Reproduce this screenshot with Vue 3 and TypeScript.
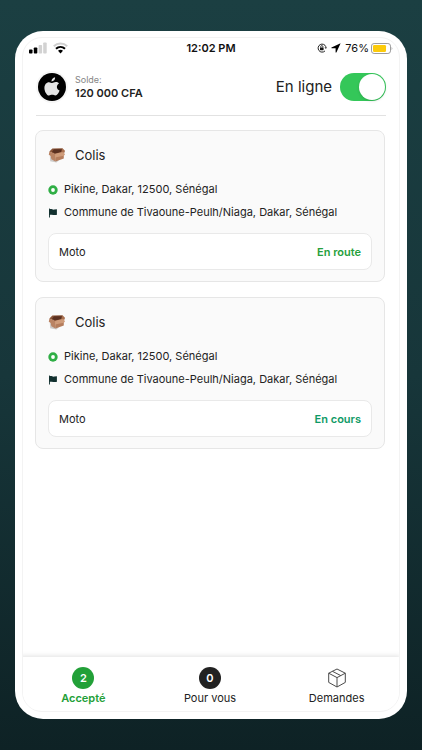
<script setup lang="ts">
import { ref } from 'vue'

interface Delivery {
  id: number
  kind: string
  from: string
  to: string
  vehicle: string
  status: string
  tone: 'green' | 'teal'
}

interface Tab {
  label: string
  count?: number
}

const online = ref(true)
const active = ref('Accepté')

const deliveries: Delivery[] = [
  {
    id: 1,
    kind: 'Colis',
    from: 'Pikine, Dakar, 12500, Sénégal',
    to: 'Commune de Tivaoune-Peulh/Niaga, Dakar, Sénégal',
    vehicle: 'Moto',
    status: 'En route',
    tone: 'green',
  },
  {
    id: 2,
    kind: 'Colis',
    from: 'Pikine, Dakar, 12500, Sénégal',
    to: 'Commune de Tivaoune-Peulh/Niaga, Dakar, Sénégal',
    vehicle: 'Moto',
    status: 'En cours',
    tone: 'teal',
  },
]

const tabs: Tab[] = [
  { label: 'Accepté', count: 2 },
  { label: 'Pour vous', count: 0 },
  { label: 'Demandes' },
]
</script>

<template>
  <div class="page">
    <div class="phone">
      <div class="screen">
        <div class="status-bar">
          <div class="status-left">
            <svg width="18" height="12" viewBox="0 0 18 12" aria-hidden="true">
              <rect x="0" y="7.5" width="3.5" height="4" rx="0.8" fill="#000" />
              <rect x="4.8" y="5.5" width="3.5" height="6" rx="0.8" fill="#000" />
              <rect x="9.6" y="3" width="3.5" height="8.5" rx="0.8" fill="#d2d2d2" />
              <rect x="14.2" y="0.5" width="3.5" height="11" rx="0.8" fill="#d2d2d2" />
            </svg>
            <svg width="15" height="12" viewBox="0 0 15 12" fill="none" aria-hidden="true">
              <path d="M0.8 4.3C4.5 0.7 10.5 0.7 14.2 4.3" stroke="#cfcfcf" stroke-width="2" />
              <path d="M3 6.8C5.6 4.4 9.4 4.4 12 6.8" stroke="#000" stroke-width="2" />
              <path d="M5 8.8C6.4 7.5 8.6 7.5 10 8.8L7.5 11.5Z" fill="#000" />
            </svg>
          </div>
          <span class="clock">12:02 PM</span>
          <div class="status-right">
            <svg width="10" height="10" viewBox="0 0 10 10" fill="none" aria-hidden="true">
              <path d="M8.9 3.8A4 4 0 1 0 8 7.9" stroke="#222" stroke-width="1" />
              <path d="M7.5 4.2H10L8.9 6Z" fill="#222" />
              <rect x="3" y="4.5" width="3.6" height="2.7" rx="0.4" fill="#111" />
              <path d="M3.7 4.6V3.7a1.1 1.1 0 0 1 2.2 0V4.6" stroke="#111" stroke-width="0.8" />
            </svg>
            <svg class="arrow" width="10" height="10" viewBox="0 0 10 10" aria-hidden="true">
              <path d="M9.6 0.3L0.5 4.4Q0 4.9 0.7 5.3H4.6V9.3Q4.9 10 5.5 9.3Z" fill="#000" />
            </svg>
            <span class="percent">76%</span>
            <svg width="22" height="11" viewBox="0 0 22 11" aria-hidden="true">
              <rect x="0.5" y="0.5" width="19" height="10" rx="2.6" fill="#fff" stroke="#9c9c9c" />
              <rect x="2" y="2" width="13" height="7" rx="1.2" fill="#fccb0c" />
              <path d="M20.7 3.8Q22 5.5 20.7 7.2Z" fill="#8c8c8c" />
            </svg>
          </div>
        </div>

        <header class="header">
          <div class="account">
            <span class="avatar">
              <svg width="16" height="19" viewBox="0 0 16 19" aria-hidden="true">
                <path
                  fill="#e4e4e4"
                  d="M11.1 0.3C11.3 2.6 9.6 4.5 7.5 4.5C7.3 2.4 9.1 0.5 11.1 0.3ZM15 6.5C13.4 7.5 12.8 8.8 12.9 10.2C13 11.8 14 13 15.6 13.6C14.8 16 13.2 18.5 11.4 18.5C10.2 18.5 9.7 17.8 8.2 17.8C6.7 17.8 6.1 18.5 5 18.5C2.8 18.5 0.4 14.3 0.4 10.9C0.4 7.5 2.5 5.2 5 5.2C6.4 5.2 7.3 6 8.2 6C9.1 6 10.2 5.1 11.8 5.1C13 5.1 14.2 5.6 15 6.5Z"
                />
              </svg>
            </span>
            <div class="balance">
              <span class="balance-label">Solde:</span>
              <strong class="balance-value">120 000 CFA</strong>
            </div>
          </div>
          <label class="online">
            <span>En ligne</span>
            <input v-model="online" class="switch" type="checkbox" role="switch" />
          </label>
        </header>

        <main class="list">
          <article v-for="d in deliveries" :key="d.id" class="card">
            <h2 class="card-title">
              <svg width="18" height="18" viewBox="0 0 18 18" aria-hidden="true">
                <path d="M1.8 10L2.2 15.2L8.5 16.4L11 14Z" fill="#cbc9c7" />
                <path d="M1.4 5.6L4.4 2.4L14.4 2.2L16.6 6.2L7.2 8.4Z" fill="#8a5538" />
                <path d="M4 5.8L6 3.3L13.8 3.3L13.4 6L7 7.4Z" fill="#5a3020" />
                <path d="M1.4 5.6L0.8 8.8L2.6 10L3.4 13.2L7.4 15.4L7.8 8.2Z" fill="#b98363" />
                <path d="M7.4 8.2L15.8 6.2L15.8 12.6L7.4 15.4Z" fill="#b57d5c" />
                <path d="M7.2 7.8L15.4 5.8L17 8.4L15.8 9.8L7 11.4Z" fill="#cf9c7a" />
                <path d="M14.4 2.2L17 4.8L16.4 6.6L13.4 6Z" fill="#a9704f" />
              </svg>
              <span>{{ d.kind }}</span>
            </h2>
            <div class="stops">
              <p class="stop">
                <svg width="10" height="10" viewBox="0 0 10 10" aria-hidden="true">
                  <circle cx="5" cy="5" r="4.7" fill="#2fae45" />
                  <circle cx="5" cy="5" r="1.9" fill="#fff" />
                </svg>
                <span>{{ d.from }}</span>
              </p>
              <p class="stop">
                <svg width="10" height="10" viewBox="0 0 10 10" aria-hidden="true">
                  <path d="M1 0.6H1.8V1.2C3.4 0.5 4.6 2 6.2 1.6L8.9 1.2V6.8C6.8 7.6 4.6 6.2 1.9 6.8V9.6H1Z" fill="#12302f" />
                </svg>
                <span>{{ d.to }}</span>
              </p>
            </div>
            <div class="ride">
              <span>{{ d.vehicle }}</span>
              <strong :class="['ride-status', d.tone]">{{ d.status }}</strong>
            </div>
          </article>
        </main>

        <nav class="tabs">
          <button
            v-for="t in tabs"
            :key="t.label"
            type="button"
            :class="['tab', { active: active === t.label }]"
            @click="active = t.label"
          >
            <span v-if="t.count !== undefined" class="count">{{ t.count }}</span>
            <span v-else class="glyph">
              <svg width="20" height="20" viewBox="0 0 20 20" fill="none" stroke="#4a4a4a" stroke-width="1" stroke-linejoin="round" aria-hidden="true">
                <path d="M10 1L18.3 5.2V14.4L10 19L1.7 14.4V5.2Z" />
                <path d="M1.7 5.2L10 9.6L18.3 5.2M10 9.6V19M5.4 3.3L13.8 7.6" />
              </svg>
            </span>
            <span class="tab-label">{{ t.label }}</span>
          </button>
        </nav>
      </div>
    </div>
  </div>
</template>

<style>
body {
  margin: 0;
}
</style>

<style scoped>
.page {
  box-sizing: border-box;
  display: flex;
  min-height: 100vh;
  padding: 31px 15px;
  background: linear-gradient(#1b3f42, #17363a 50%, #0e2225);
  color: #222;
  font-family: Inter, "Liberation Sans", sans-serif;
  font-size: 11px;
}

.phone {
  display: flex;
  flex: 1;
  min-width: 0;
  padding: 6px 7px 7px;
  border-radius: 28px;
  background: #fff;
}

.screen {
  display: flex;
  flex: 1;
  flex-direction: column;
  min-width: 0;
  overflow: hidden;
  border: 1px solid #f3f3f3;
  border-radius: 20px;
  background: #fff;
}

.status-bar {
  display: grid;
  grid-template-columns: 1fr auto 1fr;
  align-items: center;
  height: 20px;
  padding: 0 6px;
  color: #111;
}

.status-left {
  display: flex;
  gap: 6px;
}

.clock {
  font-weight: 600;
}

.status-right {
  display: flex;
  align-items: center;
  justify-content: flex-end;
}

.arrow {
  margin: 0 4px;
}

.percent {
  margin-right: 2px;
}

.header {
  display: flex;
  align-items: center;
  justify-content: space-between;
  height: 57px;
  margin: 0 13px;
  border-bottom: 1px solid #e2e2e2;
}

.account {
  display: flex;
  align-items: center;
  gap: 9px;
  margin-left: 2px;
}

.avatar {
  display: flex;
  align-items: center;
  justify-content: center;
  width: 28px;
  height: 28px;
  border-radius: 50%;
  background: #000;
  box-shadow: 0 0 0 2px #f6f6f6;
}

.balance {
  display: flex;
  flex-direction: column;
}

.balance-label {
  color: #858585;
  font-size: 9px;
  line-height: 12px;
}

.balance-value {
  font-weight: 600;
  line-height: 14px;
}

.online {
  display: flex;
  align-items: center;
  gap: 8px;
  font-size: 15px;
}

.switch {
  display: flex;
  align-items: center;
  justify-content: flex-end;
  box-sizing: border-box;
  width: 46px;
  height: 28px;
  margin: 0;
  padding: 1px;
  border-radius: 14px;
  background: #34c759;
  appearance: none;
}

.switch::before {
  width: 26px;
  height: 26px;
  border-radius: 50%;
  background: #fff;
  box-shadow: 0 1px 3px rgba(0, 0, 0, 0.15);
  content: "";
}

.switch:not(:checked) {
  justify-content: flex-start;
  background: #ddd;
}

.list {
  display: flex;
  flex: 1;
  flex-direction: column;
  gap: 15px;
  padding: 14px 14px 14px 12px;
}

.card {
  padding: 12px 12px 11px;
  border: 1px solid #e6e6e6;
  border-radius: 8px;
  background: #fafafa;
}

.card-title {
  display: flex;
  align-items: center;
  gap: 9px;
  height: 24px;
  margin: 0 0 14px;
  font-size: 13px;
  font-weight: 400;
}

.stops {
  display: flex;
  flex-direction: column;
  gap: 6px;
  margin-bottom: 12px;
}

.stop {
  display: flex;
  align-items: center;
  gap: 6px;
  margin: 0;
  line-height: 17px;
}

.ride {
  display: flex;
  align-items: center;
  justify-content: space-between;
  box-sizing: border-box;
  height: 37px;
  padding: 0 10px;
  border: 1px solid #e9e9e9;
  border-radius: 8px;
  background: #fff;
}

.ride-status {
  font-weight: 600;
}

.green {
  color: #26a03c;
}

.teal {
  color: #0f9a66;
}

.tabs {
  display: grid;
  grid-template-columns: repeat(3, 1fr);
  margin: 0 -1px 0 -3px;
  padding: 10px 0 6px;
  background: #fff;
  box-shadow: 0 -1px 5px rgba(0, 0, 0, 0.12);
}

.tab {
  display: flex;
  flex-direction: column;
  align-items: center;
  gap: 2px;
  padding: 0;
  border: 0;
  background: none;
  color: #222;
  font: inherit;
  line-height: 14px;
}

.count,
.glyph {
  display: flex;
  align-items: center;
  justify-content: center;
  width: 22px;
  height: 22px;
}

.count {
  border-radius: 50%;
  background: #222;
  color: #fff;
  font-weight: 600;
}

.active {
  color: #22a038;
  font-weight: 600;
}

.active .count {
  background: #22a038;
}
</style>
